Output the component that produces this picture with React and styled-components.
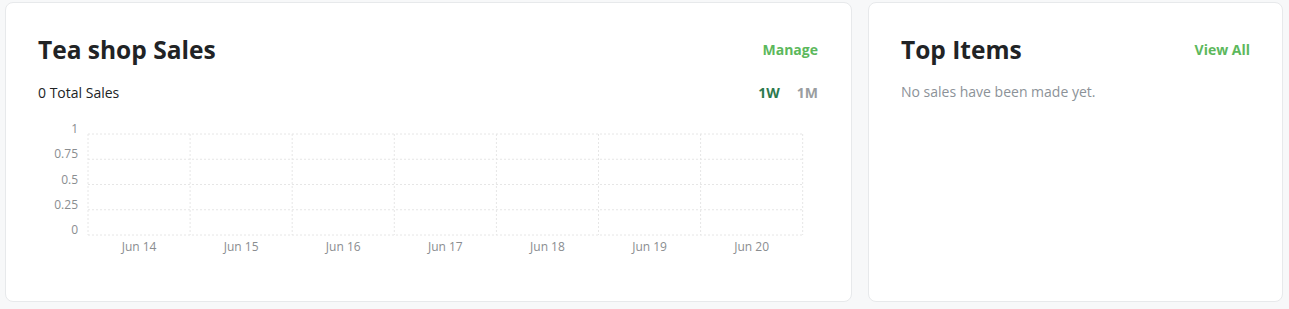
import React from "react";
import styled, { createGlobalStyle } from "styled-components";

const Global = createGlobalStyle`
  html, body { margin: 0; padding: 0; background: #f7f8f9; }
  body { font-family: "Open Sans", "Noto Sans", sans-serif; }
  * { box-sizing: border-box; }
`;

const Page = styled.div`
  display: grid;
  grid-template-columns: 847px 415px;
  gap: 16px;
  padding: 2px 0 0 5px;
`;

const Card = styled.section`
  background: #fff;
  border: 1px solid #e7e9eb;
  border-radius: 8px;
  height: 300px;
  padding: 29px ${(p) => (p.$wide ? 33 : 32)}px 0 32px;
  display: flex;
  flex-direction: column;
`;

const HeaderRow = styled.div`
  display: flex;
  align-items: center;
  justify-content: space-between;
  height: 36px;
`;

const Title = styled.h2`
  margin: 0;
  font-size: 24.5px;
  font-weight: 700;
  color: #212325;
  line-height: 36px;
`;

const LinkText = styled.a`
  font-size: 14px;
  font-weight: 700;
  color: #5cb85c;
  text-decoration: none;
  margin-top: -2px;
`;

const SubRow = styled.div`
  display: flex;
  align-items: center;
  justify-content: space-between;
  margin-top: 14px;
  height: 20px;
`;

const Total = styled.span`
  font-size: 14px;
  color: #212325;
`;

const Ranges = styled.div`
  display: flex;
  gap: 17px;
`;

const Range = styled.button`
  border: 0;
  background: none;
  padding: 0;
  font-family: inherit;
  font-size: 14px;
  font-weight: 700;
  color: ${(p) => (p.$active ? "#2d7a4e" : "#9a9da0")};
`;

const Empty = styled.p`
  margin: 14px 0 0;
  font-size: 14px;
  line-height: 20px;
  color: #8c9298;
`;

const ChartSvg = styled.svg`
  display: block;
  margin-top: 8px;
  overflow: visible;
`;

const days = ["Jun 14", "Jun 15", "Jun 16", "Jun 17", "Jun 18", "Jun 19", "Jun 20"];
const yTicks = ["1", "0.75", "0.5", "0.25", "0"];

function Chart() {
  const x0 = 50;
  const band = 102.1;
  const top = 24;
  const bottom = 125;
  const step = (bottom - top) / 4;
  const grid = "#e6e6e6";
  return (
    <ChartSvg width="779" height="150" viewBox="0 0 779 150">
      {yTicks.map((t, i) => {
        const y = top + step * i;
        return (
          <g key={t}>
            <line x1={x0} x2={x0 + band * 7} y1={y} y2={y} stroke={grid} strokeWidth="1" strokeDasharray="2 2" />
            <text x="40" y={y - 1} textAnchor="end" fontSize="12" fill="#8a8d90" fontFamily="Open Sans">
              {t}
            </text>
          </g>
        );
      })}
      {Array.from({ length: 8 }).map((_, i) => (
        <line key={i} x1={x0 + band * i} x2={x0 + band * i} y1={top} y2={bottom} stroke={grid} strokeWidth="1" strokeDasharray="2 2" />
      ))}
      {days.map((d, i) => (
        <text key={d} x={x0 + band * i + band / 2} y="140.5" textAnchor="middle" fontSize="12" fill="#8a8d90" fontFamily="Open Sans">
          {d}
        </text>
      ))}
    </ChartSvg>
  );
}

export default function App() {
  return (
    <>
      <Global />
      <Page>
        <Card $wide>
          <HeaderRow>
            <Title>Tea shop Sales</Title>
            <LinkText href="#">Manage</LinkText>
          </HeaderRow>
          <SubRow>
            <Total>0 Total Sales</Total>
            <Ranges>
              <Range $active>1W</Range>
              <Range>1M</Range>
            </Ranges>
          </SubRow>
          <Chart />
        </Card>
        <Card>
          <HeaderRow>
            <Title>Top Items</Title>
            <LinkText href="#">View All</LinkText>
          </HeaderRow>
          <Empty>No sales have been made yet.</Empty>
        </Card>
      </Page>
    </>
  );
}
